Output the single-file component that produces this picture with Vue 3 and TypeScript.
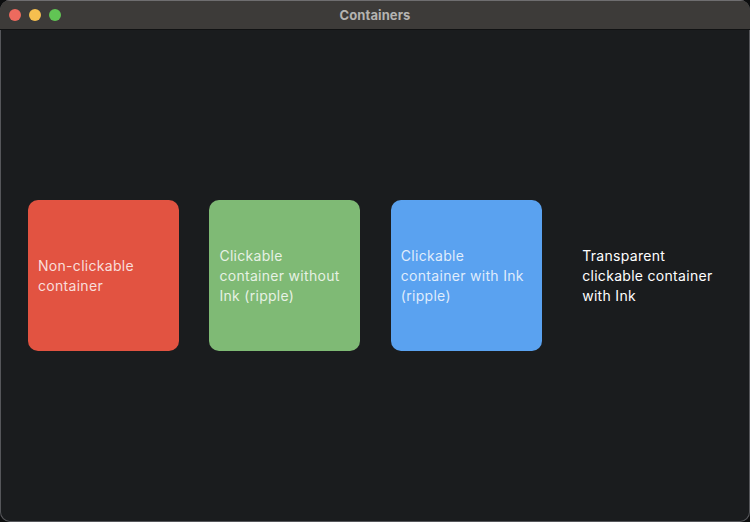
<script setup lang="ts">
interface Card { label: string; kind: string }
const cards: Card[] = [
  { label: 'Non-clickable container', kind: 'red' },
  { label: 'Clickable container without Ink (ripple)', kind: 'green' },
  { label: 'Clickable container with Ink (ripple)', kind: 'blue' },
  { label: 'Transparent clickable container with Ink', kind: 'clear' },
]
</script>

<template>
  <div class="window">
    <header class="titlebar">
      <div class="lights">
        <span class="light close"></span>
        <span class="light min"></span>
        <span class="light max"></span>
      </div>
      <div class="title">Containers</div>
    </header>
    <main class="content">
      <div v-for="c in cards" :key="c.label" class="card" :class="c.kind">{{ c.label }}</div>
    </main>
  </div>
</template>

<style>
html, body { margin: 0; background: #0d0e0f; }
</style>

<style scoped>
.window {
  width: 750px;
  height: 522px;
  box-sizing: border-box;
  display: flex;
  flex-direction: column;
  border-radius: 10px;
  overflow: hidden;
  background: #1a1c1e;
  box-shadow: inset 0 0 0 1px #55565a;
  font-family: Inter, "Liberation Sans", sans-serif;
  position: relative;
}
.titlebar {
  height: 30px;
  flex: none;
  box-sizing: border-box;
  background: #3d3b39;
  border-top: 1px solid #6f6e70;
  border-bottom: 1px solid #111213;
  position: relative;
  display: flex;
  align-items: center;
  justify-content: center;
}
.lights {
  position: absolute;
  left: 9px;
  top: 8px;
  display: flex;
  gap: 8px;
}
.light { width: 12px; height: 12px; border-radius: 50%; }
.close { background: #ed6a5e; }
.min { background: #f5bf4f; }
.max { background: #61c554; }
.title {
  color: #b4b3b1;
  font-size: 13px;
  font-weight: 700;
  letter-spacing: 0.1px;
}
.content {
  flex: 1;
  display: flex;
  align-items: center;
  gap: 30.4px;
  padding: 0 0 1px 28px;
}
.card {
  width: 151px;
  height: 151px;
  flex: none;
  box-sizing: border-box;
  padding: 10px;
  border-radius: 10px;
  display: flex;
  align-items: center;
  font-size: 14px;
  line-height: 20px;
  letter-spacing: 0.3px;
  color: rgba(255, 255, 255, 0.82);
}
.red { background: #e25341; }
.green { background: #7fba75; }
.blue { background: #5aa2f0; }
.clear { color: #fff; }
</style>
